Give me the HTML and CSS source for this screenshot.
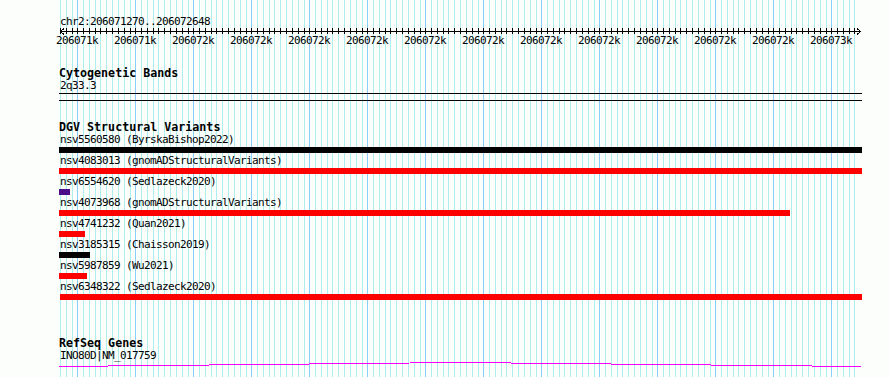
FILE: index.html
```html
<!DOCTYPE html>
<html lang="en">
<head>
    <meta charset="UTF-8">
    <title>chr2:206071270..206072648</title>
    <link rel="stylesheet" href="styles.css">
</head>
<body>
    <div class="browser">
        <!-- background grid, drawn under all tracks -->
        <svg class="grid" width="890" height="377" viewBox="0 0 890 377">
            <defs>
                <pattern id="gridLines" x="19" y="0" width="58" height="377" patternUnits="userSpaceOnUse">
                    <rect x="0" y="0" width="1" height="377" class="major"></rect>
                    <rect x="6" y="0" width="1" height="377" class="minor"></rect>
                    <rect x="12" y="0" width="1" height="377" class="minor"></rect>
                    <rect x="18" y="0" width="1" height="377" class="minor"></rect>
                    <rect x="23" y="0" width="1" height="377" class="minor"></rect>
                    <rect x="29" y="0" width="1" height="377" class="minor"></rect>
                    <rect x="35" y="0" width="1" height="377" class="minor"></rect>
                    <rect x="41" y="0" width="1" height="377" class="minor"></rect>
                    <rect x="47" y="0" width="1" height="377" class="minor"></rect>
                    <rect x="53" y="0" width="1" height="377" class="minor"></rect>
                </pattern>
            </defs>
            <rect x="60" y="0" width="796" height="377" fill="url(#gridLines)"></rect>
        </svg>

        <div class="tracks">
            <!-- Ruler -->
            <div class="ruler">
                <div class="label">chr2:206071270..206072648</div>
                <svg class="ruler-axis" width="803" height="7" viewBox="0 0 803 7">
                    <defs>
                        <pattern id="ticks" x="18" y="0" width="58" height="6" patternUnits="userSpaceOnUse">
                            <rect x="0" y="0" width="1" height="6"></rect>
                            <rect x="6" y="0" width="1" height="6"></rect>
                            <rect x="12" y="0" width="1" height="6"></rect>
                            <rect x="18" y="0" width="1" height="6"></rect>
                            <rect x="23" y="0" width="1" height="6"></rect>
                            <rect x="29" y="0" width="1" height="6"></rect>
                            <rect x="35" y="0" width="1" height="6"></rect>
                            <rect x="41" y="0" width="1" height="6"></rect>
                            <rect x="47" y="0" width="1" height="6"></rect>
                            <rect x="53" y="0" width="1" height="6"></rect>
                        </pattern>
                    </defs>
                    <rect x="1" y="0" width="797" height="6" fill="url(#ticks)"></rect>
                    <rect x="1" y="3" width="801" height="1"></rect>
                    <polyline points="5,0.5 1.5,3.5 5,6.5" class="arrow"></polyline>
                    <polyline points="798,0.5 801.5,3.5 798,6.5" class="arrow"></polyline>
                </svg>
                <div class="ruler-labels">
                    <span>206071k</span>
                    <span>206071k</span>
                    <span>206072k</span>
                    <span>206072k</span>
                    <span>206072k</span>
                    <span>206072k</span>
                    <span>206072k</span>
                    <span>206072k</span>
                    <span>206072k</span>
                    <span>206072k</span>
                    <span>206072k</span>
                    <span>206072k</span>
                    <span>206072k</span>
                    <span>206073k</span>
                </div>
            </div>

            <!-- Cytogenetic Bands -->
            <section class="track track-cyto">
                <h2 class="track-title">Cytogenetic Bands</h2>
                <div class="label">2q33.3</div>
                <div class="band"></div>
            </section>

            <!-- DGV -->
            <section class="track track-dgv">
                <h2 class="track-title">DGV Structural Variants</h2>
                <div class="feature">
                    <div class="label">nsv5560580 (ByrskaBishop2022)</div>
                    <div class="bar bar-black" style="width:803px"></div>
                </div>
                <div class="feature">
                    <div class="label">nsv4083013 (gnomADStructuralVariants)</div>
                    <div class="bar bar-red" style="width:803px"></div>
                </div>
                <div class="feature">
                    <div class="label">nsv6554620 (Sedlazeck2020)</div>
                    <div class="bar bar-purple" style="width:11px"></div>
                </div>
                <div class="feature">
                    <div class="label">nsv4073968 (gnomADStructuralVariants)</div>
                    <div class="bar bar-red" style="width:731px"></div>
                </div>
                <div class="feature">
                    <div class="label">nsv4741232 (Quan2021)</div>
                    <div class="bar bar-red" style="width:26px"></div>
                </div>
                <div class="feature">
                    <div class="label">nsv3185315 (Chaisson2019)</div>
                    <div class="bar bar-black" style="width:31px"></div>
                </div>
                <div class="feature">
                    <div class="label">nsv5987859 (Wu2021)</div>
                    <div class="bar bar-red" style="width:28px"></div>
                </div>
                <div class="feature">
                    <div class="label">nsv6348322 (Sedlazeck2020)</div>
                    <div class="bar bar-red" style="margin-left:1px;width:802px"></div>
                </div>
            </section>

            <!-- RefSeq -->
            <section class="track track-refseq">
                <h2 class="track-title">RefSeq Genes</h2>
                <div class="label">INO80D|NM_017759</div>
                <svg class="intron" width="803" height="6" viewBox="0 0 803 6">
                    <polyline points="0,4.5 401,0.5 802,4.5"></polyline>
                </svg>
            </section>
        </div>
    </div>
</body>
</html>
```

FILE: styles.css
```css
body {
    margin: 0;
    background-color: #fcfefc;
    font-family: "DejaVu Sans Mono", "Liberation Mono", monospace;
    font-size: 11px;
    letter-spacing: -0.62px;
    line-height: 13px;
    color: black;
}
.browser {
    position: relative;
    width: 890px;
    height: 377px;
    overflow: hidden;
}
.grid {
    position: absolute;
    top: 0;
    left: 0;
}
.grid .minor {
    fill: #aeeeee;
}
.grid .major {
    fill: #87cefa;
}
.tracks {
    position: relative;
    padding-top: 15px;
    padding-left: 59px;
}
.label {
    height: 13px;
    padding-left: 1px;
    white-space: nowrap;
}

/* ruler */
.ruler-axis {
    display: block;
    fill: black;
}
.ruler-axis .arrow {
    fill: none;
    stroke: black;
    stroke-width: 1;
    shape-rendering: crispEdges;
}
.ruler-labels {
    display: flex;
    margin-top: -1px;
    margin-left: -11px;
    height: 13px;
}
.ruler-labels span {
    flex: none;
    width: 58px;
    text-align: center;
}

/* tracks */
.track-title {
    margin: 0;
    height: 12px;
    font-size: 11.67px;
    letter-spacing: 0;
    line-height: 12px;
    font-weight: bold;
    white-space: nowrap;
}
.track-cyto {
    margin-top: 20px;
}
.band {
    width: 803px;
    height: 8px;
    margin-top: 1px;
    box-sizing: border-box;
    border-top: 1px solid black;
    border-bottom: 1px solid black;
}
.track-dgv {
    margin-top: 20px;
}
.feature {
    height: 21px;
}
.bar {
    height: 6px;
    margin-top: 1px;
}
.bar-black {
    background-color: black;
}
.bar-red {
    background-color: #ff0000;
}
.bar-purple {
    background-color: #4b0d88;
}
.track-refseq {
    margin-top: 36px;
}
.intron {
    display: block;
}
.intron polyline {
    fill: none;
    stroke: #ff00ff;
    stroke-width: 1;
    shape-rendering: crispEdges;
}
```
